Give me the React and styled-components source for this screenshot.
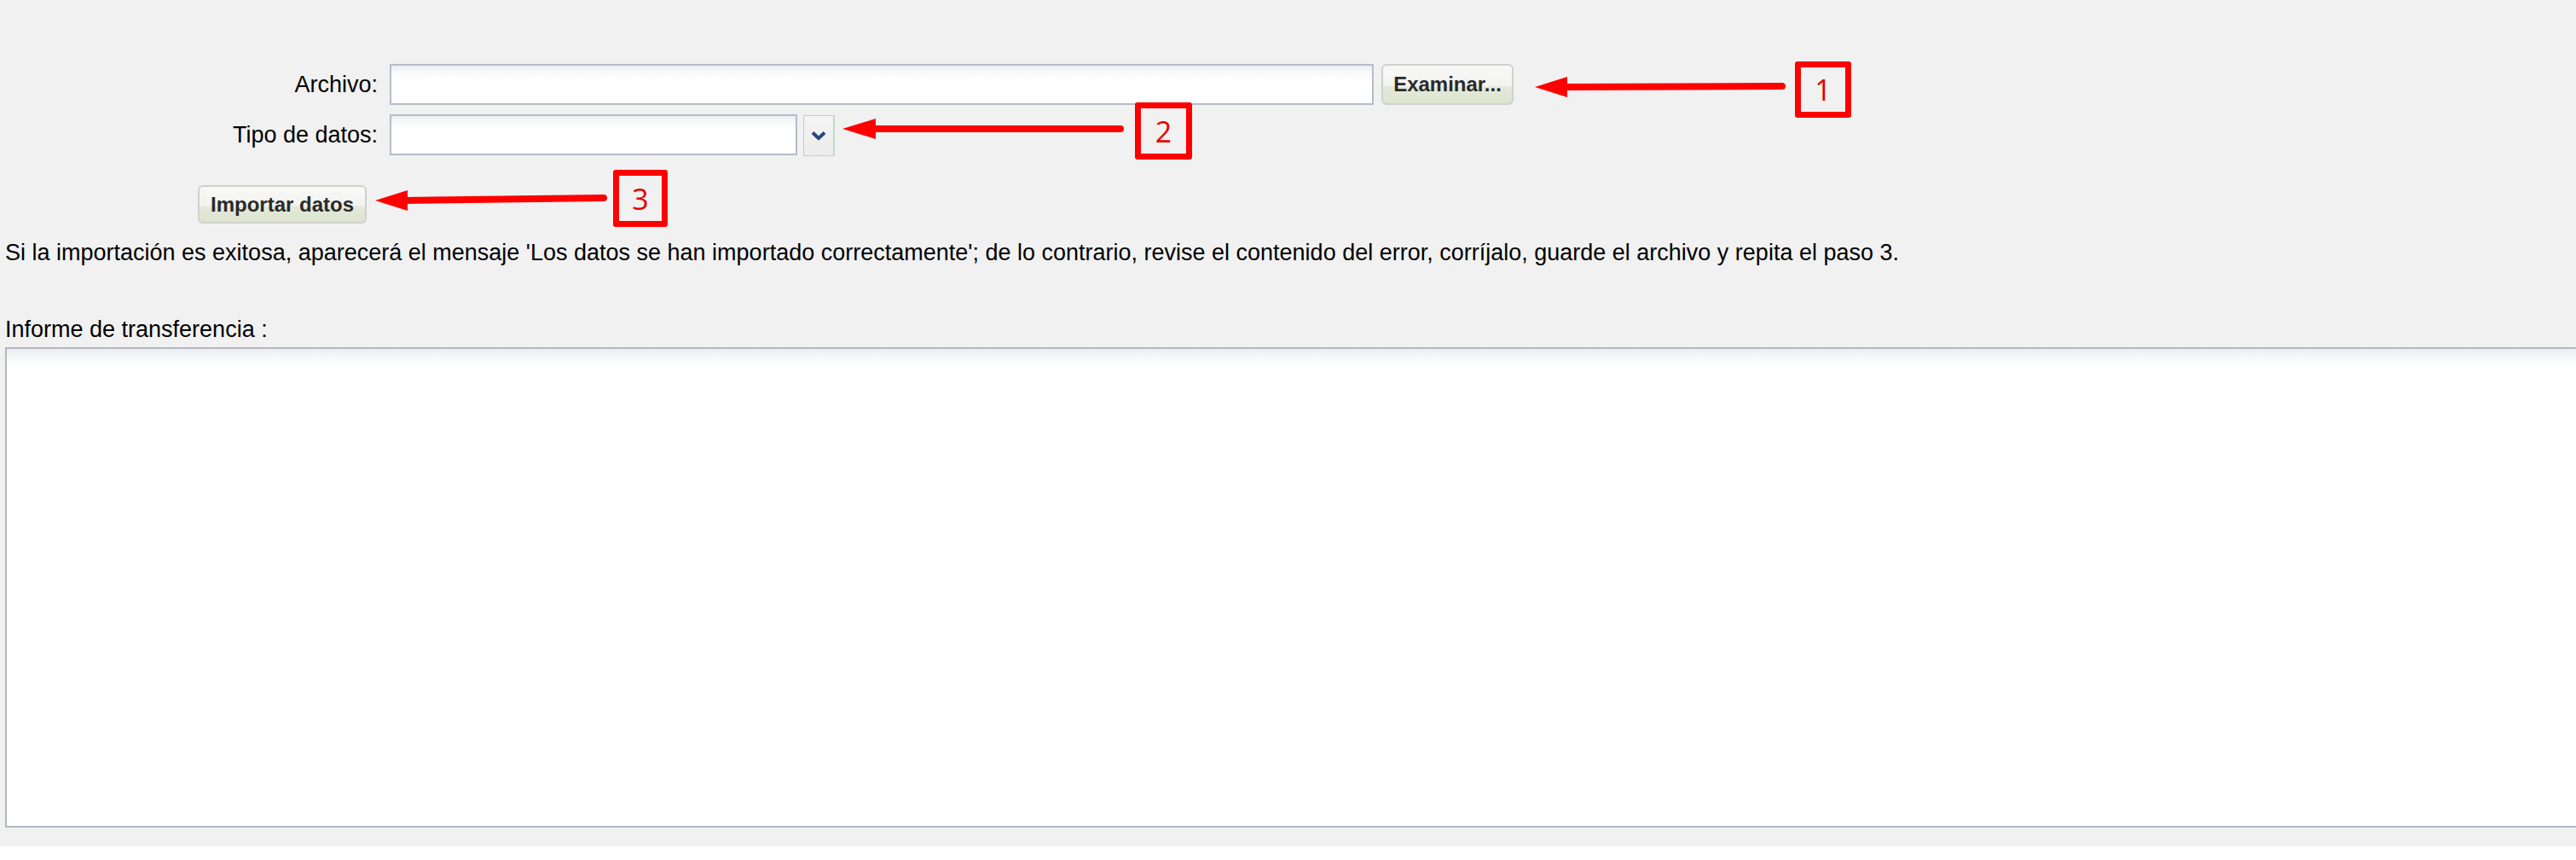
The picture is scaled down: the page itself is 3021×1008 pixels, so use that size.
import React from "react";
import styled, { createGlobalStyle } from "styled-components";

const Global = createGlobalStyle`
  html, body {
    margin: 0;
    padding: 0;
    background: #ffffff;
    overflow: hidden;
  }
  body {
    font-family: "Liberation Sans", Arial, sans-serif;
  }
`;

const Page = styled.div`
  position: relative;
  box-sizing: border-box;
  min-height: 992px;
  background: #f1f1f1;
  padding: 75px 0 0 6px;
  overflow: hidden;
  color: #000;
`;

const FormGrid = styled.div`
  display: grid;
  grid-template-columns: 437px auto;
  column-gap: 14px;
  row-gap: 10px;
  align-items: center;
`;

const Label = styled.label`
  justify-self: end;
  font-size: 27px;
  line-height: 30px;
  color: #000;
  white-space: nowrap;
`;

const FieldGroup = styled.div`
  display: flex;
  align-items: center;
  gap: ${(p) => p.$gap || 9}px;
`;

const TextInput = styled.div`
  box-sizing: border-box;
  width: ${(p) => p.$width}px;
  height: 48px;
  border: 2px solid #b8bbca;
  background: linear-gradient(to bottom, #eceef1 0px, #f8f9fa 8px, #ffffff 16px);
`;

const Button = styled.button`
  box-sizing: border-box;
  width: ${(p) => p.$width}px;
  height: ${(p) => p.$height}px;
  padding: 0;
  border: 2px solid #d0d1cd;
  border-radius: 6px;
  background: linear-gradient(
    to bottom,
    #f8f8f6 0%,
    #f3f3f0 52%,
    #e4e9da 58%,
    #dde4d0 100%
  );
  font-family: "Liberation Sans", Arial, sans-serif;
  font-weight: bold;
  font-size: 24px;
  color: #2a2a2a;
  display: flex;
  align-items: center;
  justify-content: center;
  cursor: pointer;
`;

const DropButton = styled.div`
  box-sizing: border-box;
  width: 37px;
  height: 48px;
  margin-top: 2px;
  border: 1px solid #c9c9c9;
  border-right: 2px solid #bcdcc6;
  background: linear-gradient(to bottom, #f4f4f4, #ececec);
  display: flex;
  align-items: center;
  justify-content: center;
`;

const ImportRow = styled.div`
  margin-top: 34px;
  padding-left: 226px;
`;

const Paragraph = styled.p`
  margin: 19px 0 0 0;
  font-size: 27px;
  line-height: 30px;
  white-space: nowrap;
`;

const SectionLabel = styled.div`
  margin-top: 60px;
  font-size: 27px;
  line-height: 30px;
`;

const ReportArea = styled.div`
  box-sizing: border-box;
  margin-top: 6px;
  width: 3100px;
  height: 563px;
  border: 2px solid #b3b7c4;
  border-right: none;
  background: linear-gradient(to bottom, #eceef1 0px, #f7f8f9 10px, #ffffff 22px);
`;

const Overlay = styled.svg`
  position: absolute;
  left: 0;
  top: 0;
  width: 3021px;
  height: 1008px;
  pointer-events: none;
`;

const StepBox = styled.div`
  position: absolute;
  box-sizing: border-box;
  left: ${(p) => p.$x}px;
  top: ${(p) => p.$y}px;
  width: ${(p) => p.$w}px;
  height: ${(p) => p.$h}px;
  border: 7px solid #ff0000;
  border-radius: 3px;
  display: flex;
  align-items: center;
  justify-content: center;
  font-family: "Open Sans", "Liberation Sans", sans-serif;
  font-size: 34px;
  font-weight: 400;
  line-height: 1;
  color: #e80000;
`;

const Arrow = ({ tipX, tipY, backX, tailX, tailY }) => (
  <g fill="#ff0000" stroke="#ff0000">
    <line
      x1={backX - 4}
      y1={tipY}
      x2={tailX}
      y2={tailY}
      strokeWidth="8"
      strokeLinecap="round"
    />
    <polygon
      points={`${tipX},${tipY} ${backX},${tipY - 12} ${backX},${tipY + 12}`}
      stroke="none"
    />
  </g>
);

export default function App() {
  return (
    <>
      <Global />
      <Page>
        <FormGrid>
          <Label>Archivo:</Label>
          <FieldGroup $gap={9}>
            <TextInput $width={1154} />
            <Button $width={155} $height={48}>Examinar...</Button>
          </FieldGroup>
          <Label>Tipo de datos:</Label>
          <FieldGroup $gap={7}>
            <TextInput $width={478} />
            <DropButton>
              <svg width="20" height="14" viewBox="0 0 20 14">
                <path
                  d="M3 3.5 L10 10 L17 3.5"
                  fill="none"
                  stroke="#2c4778"
                  strokeWidth="4"
                  strokeLinejoin="miter"
                />
              </svg>
            </DropButton>
          </FieldGroup>
        </FormGrid>

        <ImportRow>
          <Button $width={198} $height={45}>Importar datos</Button>
        </ImportRow>

        <Paragraph>
          Si la importación es exitosa, aparecerá el mensaje 'Los datos se han importado
          correctamente'; de lo contrario, revise el contenido del error, corríjalo, guarde
          el archivo y repita el paso 3.
        </Paragraph>

        <SectionLabel>Informe de transferencia :</SectionLabel>
        <ReportArea />

        <Overlay viewBox="0 0 3021 1008">
          <Arrow tipX={1800} tipY={102} backX={1838} tailX={2090} tailY={101} />
          <Arrow tipX={988} tipY={151} backX={1027} tailX={1314} tailY={151} />
          <Arrow tipX={440} tipY={235} backX={478} tailX={708} tailY={232} />
        </Overlay>
        <StepBox $x={2105} $y={72} $w={66} $h={66}>1</StepBox>
        <StepBox $x={1331} $y={120} $w={67} $h={67}>2</StepBox>
        <StepBox $x={719} $y={199} $w={64} $h={67}>3</StepBox>
      </Page>
    </>
  );
}
